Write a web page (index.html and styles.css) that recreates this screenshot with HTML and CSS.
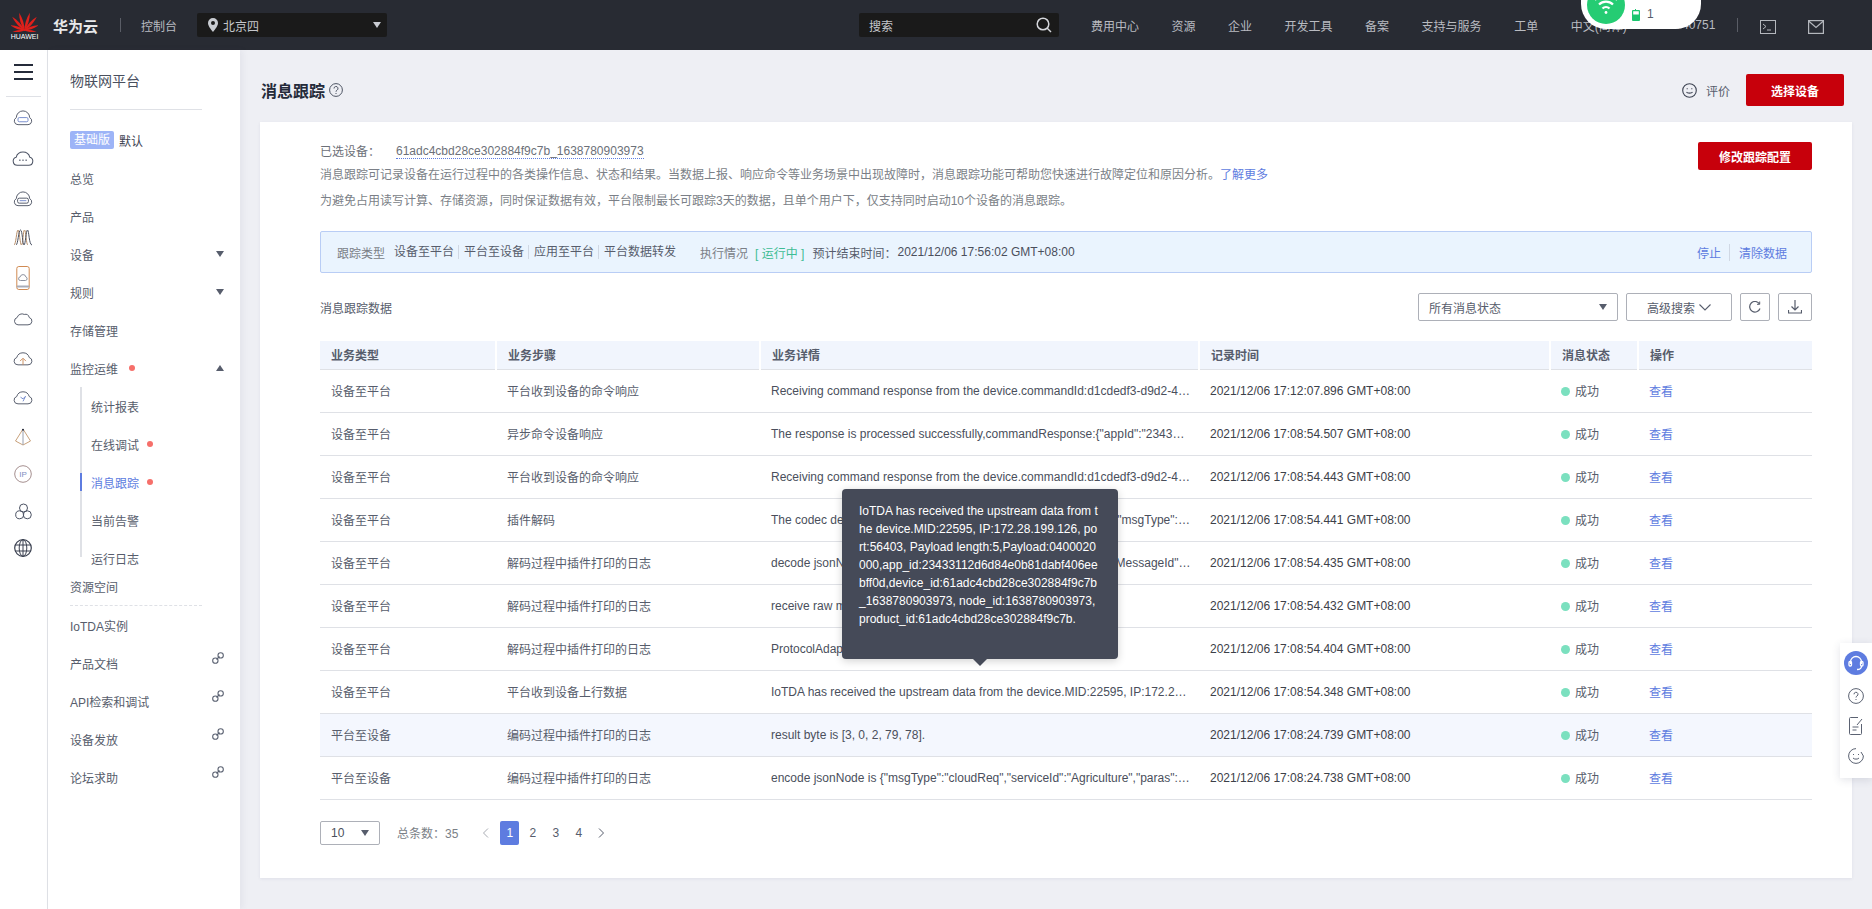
FILE: index.html
```html
<!DOCTYPE html>
<html lang="zh-CN">
<head>
    <meta charset="UTF-8">
    <meta name="viewport" content="width=device-width, initial-scale=1.0">
    <title>消息跟踪</title>
    <link rel="stylesheet" href="styles.css">
</head>
<body>
    <header class="topbar">
        <div class="logo">
            <svg width="27" height="21" viewBox="-13.5 -19 27 21">
                <g fill="#e0201b">
                    <path d="M0 1C-2.4 -5 -2.6 -12 -1 -18C1 -12 1.4 -5 0 1Z" transform="rotate(-14)"/>
                    <path d="M0 1C-2.4 -5 -2.6 -12 -1 -18C1 -12 1.4 -5 0 1Z" transform="rotate(-40)"/>
                    <path d="M0 1C-2.2 -4 -2.4 -9 -1 -15C1 -10 1.2 -4 0 1Z" transform="rotate(-68)"/>
                    <path d="M0 1C-1.6 -3 -1.8 -7 -1 -13C1 -8 1 -3 0 1Z" transform="rotate(-96)"/>
                    <path d="M0 1C-1.4 -5 -1 -12 1 -18C2.6 -12 2.4 -5 0 1Z" transform="rotate(14)"/>
                    <path d="M0 1C-1.4 -5 -1 -12 1 -18C2.6 -12 2.4 -5 0 1Z" transform="rotate(40)"/>
                    <path d="M0 1C-1.2 -4 -1 -10 1 -15C2.4 -9 2.2 -4 0 1Z" transform="rotate(68)"/>
                    <path d="M0 1C-1 -3 -1 -8 1 -13C1.8 -7 1.6 -3 0 1Z" transform="rotate(96)"/>
                </g>
            </svg>
            <span class="logo-text">HUAWEI</span>
        </div>
        <span class="brand">华为云</span>
        <span class="top-divider"></span>
        <span class="top-link console">控制台</span>
        <div class="region">
            <svg width="10" height="14" viewBox="0 0 10 14"><path fill="#c9ccd2" fill-rule="evenodd" d="M5 0a5 5 0 0 1 5 5c0 3-3 6.500-5 9-2-2.500-5-6-5-9a5 5 0 0 1 5-5zm0 3a2 2 0 1 0 0 4 2 2 0 0 0 0-4z"/></svg>
            <span>北京四</span>
            <i class="caret caret-light"></i>
        </div>
        <div class="search">
            <span>搜索</span>
            <svg width="16" height="16" viewBox="0 0 16 16" fill="none" stroke="#d5d7dc" stroke-width="1.500"><circle cx="7" cy="7" r="5.800"/><path d="M11 11l4 4"/></svg>
        </div>
        <nav class="top-nav">
            <span class="top-link">费用中心</span>
            <span class="top-link">资源</span>
            <span class="top-link">企业</span>
            <span class="top-link">开发工具</span>
            <span class="top-link">备案</span>
            <span class="top-link">支持与服务</span>
            <span class="top-link">工单</span>
            <span class="top-link">中文(简体)</span>
        </nav>
        <span class="top-link account">hw84740751</span>
        <span class="top-divider account-divider"></span>
        <svg class="top-icon" width="16" height="14" viewBox="0 0 16 14" fill="none" stroke="#b4b7bd"><rect x=".5" y=".5" width="15" height="13"/><path d="M3 4l3 2.500-3 2.500M7 10h4"/></svg>
        <svg class="top-icon mail-icon" width="16" height="14" viewBox="0 0 16 14" fill="none" stroke="#b4b7bd" stroke-width="1.200"><rect x=".6" y=".6" width="14.800" height="12.800"/><path d="M.6 1l7.400 6.500L15.400 1"/></svg>
    </header>

    <div class="net-widget">
        <div class="net-circle">
            <svg width="24" height="20" viewBox="0 0 24 20" fill="none" stroke="#fff" stroke-width="2.200"><path d="M1 5a15 15 0 0 1 22 0"/><path d="M5 9.500a10 10 0 0 1 14 0"/><path d="M8.500 13.500a5 5 0 0 1 7 0"/><circle cx="12" cy="17.500" r="1.400" fill="#fff" stroke="none"/></svg>
        </div>
        <svg class="net-battery" width="8" height="12" viewBox="0 0 8 12"><path fill="#1bc66f" fill-rule="evenodd" d="M1 1h2V0h1v1h3a1 1 0 0 1 1 1v9a1 1 0 0 1-1 1H1a1 1 0 0 1-1-1V2a1 1 0 0 1 1-1zm.2 1.200v3.300h5.600V2.200z"/></svg>
        <span class="net-count">1</span>
    </div>

    <div class="layout">
        <aside class="rail">
            <div class="hamburger"><i></i><i></i><i></i></div>
            <div class="rail-line"></div>
            <div class="rail-icons">
                <svg width="20" height="20" viewBox="0 0 24 24" fill="none" stroke="#4b5263" stroke-width="1.100"><path d="M6 20h12a4.500 4.500 0 0 0 2-8.500A8 8 0 0 0 4 11.500 4.500 4.500 0 0 0 6 20z"/><rect x="6" y="11.500" width="12" height="5" rx="1.500" stroke="#6f86c9"/></svg>
                <svg width="22" height="22" viewBox="0 0 24 24" fill="none" stroke="#4b5263" stroke-width="1.100"><path d="M6 20h12a4.500 4.500 0 0 0 1.500-8.800A7.800 7.800 0 0 0 4.500 11.200 4.500 4.500 0 0 0 6 20z"/><path d="M8 14.500h1.200M11.400 14.500h1.200M14.800 14.500H16" stroke-width="1.600"/></svg>
                <svg width="20" height="20" viewBox="0 0 24 24" fill="none" stroke="#4b5263" stroke-width="1.100"><path d="M6 20h12a4.500 4.500 0 0 0 2-8.500A8 8 0 0 0 4 11.500 4.500 4.500 0 0 0 6 20z"/><rect x="5.500" y="11" width="13" height="6" rx="2"/><path d="M8 14h8" stroke="#6f86c9"/></svg>
                <svg width="20" height="18" viewBox="0 0 20 18" fill="none" stroke="#4b5263"><path d="M1 17C3 17 3.500 2 5 2s2 15 3.500 15S10 2 11.500 2 13 17 15 17" stroke="#b88f6a"/><path d="M3 17C5 17 5.500 2 7.500 2S9.500 17 11 17s2-15 3.500-15S16 17 19 17"/></svg>
                <svg width="14" height="24" viewBox="0 0 14 24" fill="none" stroke="#4b5263"><rect x=".8" y=".5" width="12.400" height="23" rx="2" stroke="#d08a52"/><path d="M.8 20.500h12.400" stroke="#a9adb8" stroke-width="2"/><path d="M4.500 14.500h5a1.800 1.800 0 0 0 .4-3.500 2.900 2.900 0 0 0-5.700-.1 1.800 1.800 0 0 0 .3 3.600z" stroke="#8e93a0"/></svg>
                <svg width="20" height="20" viewBox="0 0 24 24" fill="none" stroke="#4b5263" stroke-width="1.100"><path d="M6 19h12a4.500 4.500 0 0 0 1.500-8.800 5 5 0 0 0-6-3.700A6 6 0 0 0 5 10.200 4.500 4.500 0 0 0 6 19z"/></svg>
                <svg width="20" height="20" viewBox="0 0 24 24" fill="none" stroke="#4b5263" stroke-width="1.100"><path d="M6 19h12a4.500 4.500 0 0 0 1.500-8.800A7.800 7.800 0 0 0 4.500 10.200 4.500 4.500 0 0 0 6 19z"/><path d="M12 19v-7M8.500 14.500L12 11l3.500 3.500" stroke="#c88a5a"/></svg>
                <svg width="20" height="20" viewBox="0 0 24 24" fill="none" stroke="#4b5263" stroke-width="1.100"><path d="M6 19h12a4.500 4.500 0 0 0 1.500-8.800A7.800 7.800 0 0 0 4.500 10.200 4.500 4.500 0 0 0 6 19z"/><path d="M9 11l3 2 3-3-3 6" stroke="#6f86c9"/></svg>
                <svg width="18" height="18" viewBox="0 0 18 18" fill="none" stroke="#9aa0ae"><path d="M9 1L1.500 13 9 17l7.500-4z" stroke="#c9a27c"/><path d="M9 1v16"/><circle cx="9" cy="1.800" r="1" fill="#252b3a" stroke="none"/></svg>
                <svg width="18" height="18" viewBox="0 0 18 18" fill="none" stroke="#a58f8f"><circle cx="9" cy="9" r="8.300"/><text class="rail-ip" x="9" y="12">IP</text></svg>
                <svg width="17" height="17" viewBox="0 0 17 17" fill="none" stroke="#4b5263"><circle cx="8.500" cy="5" r="4"/><circle cx="4.700" cy="11.800" r="4"/><circle cx="12.300" cy="11.800" r="4"/></svg>
                <svg width="18" height="18" viewBox="0 0 18 18" fill="none" stroke="#3b4150"><circle cx="9" cy="9" r="8.300" stroke-width="1.200"/><ellipse cx="9" cy="9" rx="3.800" ry="8.300"/><path d="M9 .7v16.600M1 6h16M1 12h16"/></svg>
            </div>
        </aside>

        <aside class="sidebar">
            <div class="side-title">物联网平台</div>
            <div class="side-line"></div>
            <div class="side-plan"><span class="plan-badge">基础版</span><span>默认</span></div>
            <ul class="menu">
                <li class="menu-item">总览</li>
                <li class="menu-item">产品</li>
                <li class="menu-item">设备<i class="caret caret-menu"></i></li>
                <li class="menu-item">规则<i class="caret caret-menu"></i></li>
                <li class="menu-item">存储管理</li>
                <li class="menu-item">监控运维<b class="dot dot-main"></b><i class="caret caret-menu caret-up"></i></li>
                <li class="submenu">
                    <div class="sub-item">统计报表</div>
                    <div class="sub-item">在线调试<b class="dot"></b></div>
                    <div class="sub-item active">消息跟踪<b class="dot"></b></div>
                    <div class="sub-item">当前告警</div>
                    <div class="sub-item">运行日志</div>
                </li>
                <li class="menu-item">资源空间</li>
                <li class="menu-dash"></li>
                <li class="menu-item iot">IoTDA实例</li>
                <li class="menu-item">产品文档<svg class="link-icon" width="12" height="12" viewBox="0 0 12 12" fill="none" stroke="#5b6272" stroke-width="1.100"><rect x="6" y=".7" width="5.300" height="5.300" rx="2.600"/><rect x=".7" y="6" width="5.300" height="5.300" rx="2.600"/><path d="M4.500 7.500l3-3"/></svg></li>
                <li class="menu-item">API检索和调试<svg class="link-icon" width="12" height="12" viewBox="0 0 12 12" fill="none" stroke="#5b6272" stroke-width="1.100"><rect x="6" y=".7" width="5.300" height="5.300" rx="2.600"/><rect x=".7" y="6" width="5.300" height="5.300" rx="2.600"/><path d="M4.500 7.500l3-3"/></svg></li>
                <li class="menu-item">设备发放<svg class="link-icon" width="12" height="12" viewBox="0 0 12 12" fill="none" stroke="#5b6272" stroke-width="1.100"><rect x="6" y=".7" width="5.300" height="5.300" rx="2.600"/><rect x=".7" y="6" width="5.300" height="5.300" rx="2.600"/><path d="M4.500 7.500l3-3"/></svg></li>
                <li class="menu-item">论坛求助<svg class="link-icon" width="12" height="12" viewBox="0 0 12 12" fill="none" stroke="#5b6272" stroke-width="1.100"><rect x="6" y=".7" width="5.300" height="5.300" rx="2.600"/><rect x=".7" y="6" width="5.300" height="5.300" rx="2.600"/><path d="M4.500 7.500l3-3"/></svg></li>
            </ul>
        </aside>

        <main class="main">
            <div class="page-head">
                <h1>消息跟踪</h1>
                <svg class="help-icon" width="14" height="14" viewBox="0 0 14 14" fill="none" stroke="#4e5564"><circle cx="7" cy="7" r="6.400"/><path d="M5 5.500a2 2 0 1 1 3 1.700c-.7.400-1 .8-1 1.500M7 10v1"/></svg>
                <div class="head-right">
                    <svg width="15" height="15" viewBox="0 0 15 15" fill="none" stroke="#3d4352" stroke-width="1.100"><circle cx="7.500" cy="7.500" r="6.800"/><path d="M4.500 9c.8 1.500 5.200 1.500 6 0M5.200 5.200v1M9.800 5.200v1"/></svg>
                    <span class="rate">评价</span>
                    <button class="btn-red btn-select">选择设备</button>
                </div>
            </div>

            <section class="card">
                <div class="intro">
                    <div class="intro-text">
                        <div class="device-line"><span class="device-label">已选设备：</span><span class="device-id">61adc4cbd28ce302884f9c7b_1638780903973</span></div>
                        <p>消息跟踪可记录设备在运行过程中的各类操作信息、状态和结果。当数据上报、响应命令等业务场景中出现故障时，消息跟踪功能可帮助您快速进行故障定位和原因分析。<a class="link">了解更多</a></p>
                        <p>为避免占用读写计算、存储资源，同时保证数据有效，平台限制最长可跟踪3天的数据，且单个用户下，仅支持同时启动10个设备的消息跟踪。</p>
                    </div>
                    <button class="btn-red btn-config">修改跟踪配置</button>
                </div>

                <div class="trace-bar">
                    <span class="trace-label">跟踪类型</span>
                    <span class="trace-tag first">设备至平台</span>
                    <span class="trace-tag">平台至设备</span>
                    <span class="trace-tag">应用至平台</span>
                    <span class="trace-tag last">平台数据转发</span>
                    <span class="trace-label state">执行情况</span>
                    <span class="running">[ 运行中 ]</span>
                    <span class="trace-end">预计结束时间：</span>
                    <span class="trace-time">2021/12/06 17:56:02 GMT+08:00</span>
                    <span class="trace-actions"><a class="link">停止</a><a class="link">清除数据</a></span>
                </div>

                <div class="filter-row">
                    <span class="filter-title">消息跟踪数据</span>
                    <div class="select select-status"><span>所有消息状态</span><i class="caret caret-menu"></i></div>
                    <div class="select select-adv"><span>高级搜索</span><svg width="12" height="7" viewBox="0 0 12 7" fill="none" stroke="#575d6c" stroke-width="1.100"><path d="M.5.500L6 6 11.500.500"/></svg></div>
                    <div class="select icon-btn"><svg width="12" height="12" viewBox="0 0 12 12" fill="none" stroke="#575d6c" stroke-width="1.200"><path d="M10.500 3A5.300 5.300 0 1 0 11 7.500"/><path d="M10.700.5v2.800H8" stroke-width="1"/></svg></div>
                    <div class="select icon-btn icon-btn-wide"><svg width="14" height="14" viewBox="0 0 14 14" fill="none" stroke="#575d6c" stroke-width="1.200"><path d="M7 0v9.500M3.500 6.500L7 10l3.500-3.500M.5 10v3h13v-3"/></svg></div>
                </div>

                <table class="log-table">
                    <colgroup>
                        <col class="col-type"><col class="col-step"><col class="col-detail"><col class="col-time"><col class="col-state"><col>
                    </colgroup>
                    <thead>
                        <tr><th>业务类型</th><th>业务步骤</th><th>业务详情</th><th>记录时间</th><th>消息状态</th><th>操作</th></tr>
                    </thead>
                    <tbody>
                        <tr><td>设备至平台</td><td>平台收到设备的命令响应</td><td class="detail">Receiving command response from the device.commandId:d1cdedf3-d9d2-4c5e-8f10-2a6b7c1e9d34</td><td class="time">2021/12/06 17:12:07.896 GMT+08:00</td><td><b class="ok"></b>成功</td><td><a class="link">查看</a></td></tr>
                        <tr><td>设备至平台</td><td>异步命令设备响应</td><td class="detail">The response is processed successfully,commandResponse:{"appId":"23433112d6d84e0b81dabf406eebff0d"}</td><td class="time">2021/12/06 17:08:54.507 GMT+08:00</td><td><b class="ok"></b>成功</td><td><a class="link">查看</a></td></tr>
                        <tr><td>设备至平台</td><td>平台收到设备的命令响应</td><td class="detail">Receiving command response from the device.commandId:d1cdedf3-d9d2-4c5e-8f10-2a6b7c1e9d34</td><td class="time">2021/12/06 17:08:54.443 GMT+08:00</td><td><b class="ok"></b>成功</td><td><a class="link">查看</a></td></tr>
                        <tr><td>设备至平台</td><td>插件解码</td><td class="detail">The codec decodes the data successfully,result is {"identifier":"0","msgType":"DEVICE_STATUS"}</td><td class="time">2021/12/06 17:08:54.441 GMT+08:00</td><td><b class="ok"></b>成功</td><td><a class="link">查看</a></td></tr>
                        <tr><td>设备至平台</td><td>解码过程中插件打印的日志</td><td class="detail">decode jsonNode is {"header":{"msgType":"deviceRsp"},"body":{"MessageId":"1"}}</td><td class="time">2021/12/06 17:08:54.435 GMT+08:00</td><td><b class="ok"></b>成功</td><td><a class="link">查看</a></td></tr>
                        <tr><td>设备至平台</td><td>解码过程中插件打印的日志</td><td class="detail">receive raw message is [4, 0, 2, 0, 0]</td><td class="time">2021/12/06 17:08:54.432 GMT+08:00</td><td><b class="ok"></b>成功</td><td><a class="link">查看</a></td></tr>
                        <tr><td>设备至平台</td><td>解码过程中插件打印的日志</td><td class="detail">ProtocolAdapter decode finished</td><td class="time">2021/12/06 17:08:54.404 GMT+08:00</td><td><b class="ok"></b>成功</td><td><a class="link">查看</a></td></tr>
                        <tr><td>设备至平台</td><td>平台收到设备上行数据</td><td class="detail">IoTDA has received the upstream data from the device.MID:22595, IP:172.28.199.126, port:56403, Payload length:5</td><td class="time">2021/12/06 17:08:54.348 GMT+08:00</td><td><b class="ok"></b>成功</td><td><a class="link">查看</a></td></tr>
                        <tr class="hovered"><td>平台至设备</td><td>编码过程中插件打印的日志</td><td class="detail">result byte is [3, 0, 2, 79, 78].</td><td class="time">2021/12/06 17:08:24.739 GMT+08:00</td><td><b class="ok"></b>成功</td><td><a class="link">查看</a></td></tr>
                        <tr><td>平台至设备</td><td>编码过程中插件打印的日志</td><td class="detail">encode jsonNode is {"msgType":"cloudReq","serviceId":"Agriculture","paras":{"value":"ON"}}</td><td class="time">2021/12/06 17:08:24.738 GMT+08:00</td><td><b class="ok"></b>成功</td><td><a class="link">查看</a></td></tr>
                    </tbody>
                </table>

                <div class="pager">
                    <div class="select select-size"><span>10</span><i class="caret caret-menu"></i></div>
                    <span class="total">总条数：35</span>
                    <svg class="pager-arrow" width="7" height="10" viewBox="0 0 7 10" fill="none" stroke="#a8abb3"><path d="M6 .5L1.500 5 6 9.500"/></svg>
                    <span class="page current">1</span>
                    <span class="page">2</span>
                    <span class="page">3</span>
                    <span class="page">4</span>
                    <svg class="pager-arrow" width="7" height="10" viewBox="0 0 7 10" fill="none" stroke="#575d6c"><path d="M1 .5L5.500 5 1 9.500"/></svg>
                </div>
            </section>
        </main>
    </div>

    <div class="tooltip">IoTDA has received the upstream data from the device.MID:22595, IP:172.28.199.126, port:56403, Payload length:5,Payload:0400020000,app_id:23433112d6d84e0b81dabf406eebff0d,device_id:61adc4cbd28ce302884f9c7b_1638780903973, node_id:1638780903973,product_id:61adc4cbd28ce302884f9c7b.</div>

    <div class="float-panel">
        <div class="float-service">
            <svg width="16" height="16" viewBox="0 0 16 16" fill="none" stroke="#fff" stroke-width="1.300"><path d="M2.500 9V7a5.500 5.500 0 0 1 11 0v2"/><rect x="1" y="6.500" width="2.500" height="4.500" rx="1"/><rect x="12.500" y="6.500" width="2.500" height="4.500" rx="1"/><path d="M13.500 11c0 2.500-2 3.500-4.500 3.500"/></svg>
        </div>
        <svg width="16" height="16" viewBox="0 0 16 16" fill="none" stroke="#5b6272"><circle cx="8" cy="8" r="7.400"/><path d="M6 6.300a2 2 0 1 1 3 1.700c-.7.400-1 .8-1 1.500M8 11v1"/></svg>
        <svg width="14" height="18" viewBox="0 0 14 18" fill="none" stroke="#5b6272"><path d="M9 .5H1.500a1 1 0 0 0-1 1v15a1 1 0 0 0 1 1h10a1 1 0 0 0 1-1V7"/><path d="M3.500 10h6M3.500 13h4M8 8l5-6"/></svg>
        <svg width="16" height="16" viewBox="0 0 16 16" fill="none" stroke="#5b6272"><path d="M8 .6a7.400 7.400 0 1 0 7.400 7.400L13 4"/><path d="M5 10c1 1.500 5 1.500 6 0M5.500 6v1M10.500 6v1"/></svg>
    </div>
</body>
</html>
```

FILE: styles.css
```css
* {
    box-sizing: border-box;
}
html, body {
    height: 100%;
}
body {
    margin: 0;
    overflow: hidden;
    font-family: "Liberation Sans", "Noto Sans CJK SC", sans-serif;
    font-size: 12px;
    color: #575d6c;
    background: #eeeff4;
}
i, b {
    font-style: normal;
    font-weight: normal;
}
ul {
    list-style: none;
    margin: 0;
    padding: 0;
}
p {
    margin: 0;
}
.link {
    color: #5e7ce0;
}
.caret {
    display: inline-block;
    width: 0;
    height: 0;
    border-left: 4px solid transparent;
    border-right: 4px solid transparent;
    border-top: 6px solid #575d6c;
}
.caret-light {
    border-top-color: #c9ccd2;
    margin-left: auto;
}
.caret-up {
    border-top: none;
    border-bottom: 6px solid #575d6c;
}

/* top bar */
.topbar {
    height: 50px;
    display: flex;
    align-items: center;
    padding-left: 11px;
    background: #282b33;
    color: #c5c7cc;
}
.logo {
    width: 27px;
    display: flex;
    flex-direction: column;
    align-items: center;
}
.logo svg {
    display: block;
}
.logo-text {
    font-size: 7px;
    line-height: 7px;
    margin-top: 1px;
    color: #fff;
}
.brand {
    margin-left: 15px;
    font-size: 15px;
    font-weight: bold;
    color: #e8e9eb;
}
.top-divider {
    width: 1px;
    height: 14px;
    background: #5a5d66;
    margin-left: 22px;
}
.top-link {
    white-space: nowrap;
    color: #b9bbc1;
}
.console {
    margin-left: 20px;
}
.region {
    width: 190px;
    height: 24px;
    margin-left: 20px;
    padding: 0 6px 0 11px;
    display: flex;
    align-items: center;
    gap: 5px;
    border-radius: 2px;
    background: #1a1a1a;
}
.search {
    width: 200px;
    height: 24px;
    margin-left: 472px;
    padding: 0 7px 0 10px;
    display: flex;
    align-items: center;
    justify-content: space-between;
    border-radius: 2px;
    background: #1a1a1a;
}
.top-nav {
    display: flex;
    gap: 32.500px;
    margin-left: 32px;
}
.account {
    margin-left: 20px;
}
.account-divider {
    margin-left: 22px;
}
.top-icon {
    margin-left: 22px;
    margin-top: 3px;
}
.mail-icon {
    margin-left: 32px;
}

/* network widget over the top bar */
.net-widget {
    position: absolute;
    top: 0;
    left: 1581px;
    width: 120px;
    height: 29px;
    border-radius: 0 0 25px 25px;
    background: #fff;
}
.net-circle {
    position: absolute;
    left: 6px;
    top: -14px;
    width: 38px;
    height: 38px;
    border-radius: 50%;
    background: #25cc73;
    display: flex;
    align-items: center;
    justify-content: center;
}
.net-battery {
    position: absolute;
    left: 51px;
    top: 9px;
}
.net-count {
    position: absolute;
    left: 66px;
    top: 7px;
    color: #575d6c;
}

/* body columns */
.layout {
    display: flex;
    height: calc(100% - 50px);
}
.rail {
    width: 48px;
    background: #fff;
    border-right: 1px solid #dfe1e6;
    padding: 14px 6px 0 6px;
}
.hamburger {
    height: 32px;
    display: flex;
    flex-direction: column;
    justify-content: space-between;
    padding: 0 8px 16px 8px;
}
.hamburger i {
    display: block;
    height: 2px;
    background: #252b3a;
}
.rail-line {
    height: 1px;
    margin-top: 0;
    background: #dfe1e6;
}
.rail-icons {
    display: flex;
    flex-direction: column;
    align-items: center;
    margin-top: 11px;
    margin-right: 1px;
}
.rail-icons svg {
    display: block;
    margin-bottom: 19px;
}
.rail-icons svg:nth-child(2n) {
    margin-bottom: 20px;
}
.rail-ip {
    font-size: 8px;
    text-anchor: middle;
    fill: #7f8ec0;
    stroke: none;
}
.sidebar {
    width: 192px;
    background: #fff;
    box-shadow: 3px 0 6px rgba(60, 70, 100, 0.06);
    padding-left: 22px;
    position: relative;
}
.side-title {
    margin-top: 21px;
    height: 20px;
    line-height: 20px;
    font-size: 14px;
    color: #4a505e;
}
.side-line {
    width: 132px;
    height: 1px;
    margin-top: 18px;
    background: #dfe1e6;
}
.side-plan {
    display: flex;
    align-items: center;
    gap: 5px;
    margin-top: 21px;
    height: 18px;
    color: #3c4250;
}
.plan-badge {
    width: 44px;
    height: 18px;
    line-height: 18px;
    text-align: center;
    border-radius: 2px;
    color: #fff;
    background: #9db4f7;
}
.menu {
    margin-top: 10px;
}
.menu-item {
    height: 38px;
    width: 154px;
    display: flex;
    align-items: center;
    position: relative;
}
.caret-menu {
    margin-left: auto;
}
.dot {
    width: 6px;
    height: 6px;
    margin-left: 8px;
    border-radius: 50%;
    background: #f66f6a;
}
.dot-main {
    margin-left: 11px;
}
.submenu {
    margin: 0 0 0 10px;
    border-left: 2px solid #dfe1e6;
    padding: 0;
    height: 170px;
    margin-top: 10px;
    margin-bottom: 10px;
}
.sub-item {
    height: 38px;
    margin-top: -10px;
    padding-left: 9px;
    margin-bottom: 10px;
    display: flex;
    align-items: center;
    position: relative;
}
.sub-item.active {
    color: #5e7ce0;
}
.sub-item.active::before {
    content: "";
    position: absolute;
    left: -2px;
    top: 10px;
    width: 2px;
    height: 18px;
    background: #5e7ce0;
}
.menu-dash {
    width: 132px;
    margin-top: 0;
    border-top: 1px dashed #dfe1e6;
}
.link-icon {
    margin-left: auto;
    margin-top: -10px;
}

/* main content */
.main {
    flex: 1;
    padding: 0 20px 0 20px;
}
.page-head {
    height: 72px;
    display: flex;
    align-items: center;
    padding-top: 8px;
    margin-right: 8px;
}
.page-head h1 {
    margin: 0;
    font-size: 16px;
    font-weight: bold;
    color: #252b3a;
    margin-left: 1px;
}
.help-icon {
    margin-left: 4px;
}
.head-right {
    margin-left: auto;
    display: flex;
    align-items: center;
}
.rate {
    margin-left: 9px;
    margin-right: 16px;
}
button {
    font-family: inherit;
    font-size: 12px;
    font-weight: bold;
    color: #fff;
    background: #c7000b;
    border: none;
    border-radius: 2px;
    padding: 0;
}
.btn-select {
    width: 98px;
    height: 32px;
}
.btn-config {
    width: 114px;
    height: 28px;
    margin-left: auto;
    margin-top: 20px;
}
.card {
    height: 756px;
    background: #fff;
    box-shadow: 0 1px 3px rgba(60, 70, 100, 0.08);
    padding: 0 40px 0 60px;
}
.intro {
    display: flex;
    height: 109px;
}
.intro-text p {
    line-height: 26px;
    color: #7b7f87;
}
.device-line {
    margin-top: 20px;
    height: 20px;
    line-height: 20px;
    display: flex;
    color: #6c7078;
}
.device-label {
    width: 76px;
}
.device-id {
    height: 17px;
    line-height: 18px;
    border-bottom: 1px dotted #5e7ce0;
}
.trace-bar {
    height: 42px;
    display: flex;
    align-items: center;
    padding: 0 24px 0 16px;
    background: #eaf4fe;
    border: 1px solid #b9cdf5;
    border-radius: 2px;
}
.trace-label {
    color: #7b7f87;
}
.trace-tag {
    padding: 0 4px 0 5px;
    border-right: 1px solid #d0d8e4;
    line-height: 14px;
}
.trace-tag.first {
    margin-left: 9px;
    padding-left: 0;
}
.trace-tag.last {
    border-right: none;
}
.state {
    margin-left: 20px;
}
.running {
    margin-left: 7px;
    color: #3ebd95;
    word-spacing: 0;
}
.trace-end {
    margin-left: 8px;
}
.trace-time {
    margin-left: 1px;
    color: #4a4f5c;
}
.trace-actions {
    margin-left: auto;
    display: flex;
    align-items: center;
}
.trace-actions .link:first-child {
    padding-right: 8px;
    margin-right: 9px;
    border-right: 1px solid #d0d8e4;
}
.filter-row {
    height: 68px;
    display: flex;
    align-items: center;
    gap: 8px;
    padding-bottom: 0;
}
.filter-title {
    margin-right: auto;
}
.select {
    height: 28px;
    display: flex;
    align-items: center;
    border: 1px solid #adb0b8;
    border-radius: 2px;
    background: #fff;
}
.select-status {
    width: 200px;
    padding: 0 10px;
}
.select-adv {
    width: 106px;
    justify-content: center;
    gap: 4px;
}
.icon-btn {
    width: 30px;
    justify-content: center;
}
.icon-btn-wide {
    width: 34px;
}
.log-table {
    width: 100%;
    border-collapse: collapse;
    table-layout: fixed;
}
.col-type {
    width: 176px;
}
.col-step {
    width: 264px;
}
.col-detail {
    width: 439px;
}
.col-time {
    width: 351px;
}
.col-state {
    width: 88px;
}
.log-table th {
    height: 28px;
    padding: 0 11px;
    text-align: left;
    font-weight: bold;
    color: #575d6c;
    background: #f1f5fd;
    border-bottom: 1px solid #dfe1e6;
    border-right: 2px solid #fff;
}
.log-table th:last-child {
    border-right: none;
}
.log-table td {
    height: 43px;
    padding: 0 11px;
    border-bottom: 1px solid #dfe1e6;
    white-space: nowrap;
    overflow: hidden;
    text-overflow: ellipsis;
}
.log-table .detail {
    color: #4a4f5c;
    padding-right: 8px;
}
.log-table .time {
    color: #3c4048;
}
.hovered td {
    background: #f4f7fe;
}
.ok {
    display: inline-block;
    width: 9px;
    height: 9px;
    margin-right: 5px;
    border-radius: 50%;
    background: #7be0bf;
}
.pager {
    margin-top: 21px;
    display: flex;
    align-items: center;
}
.select-size {
    width: 60px;
    height: 24px;
    padding: 0 10px;
    color: #4a4f5c;
}
.total {
    margin-left: 17px;
    color: #7b7f87;
}
.pager-arrow {
    margin-left: 24px;
}
.page {
    width: 19px;
    height: 24px;
    line-height: 24px;
    text-align: center;
    margin-left: 4px;
}
.page.current {
    margin-left: 11px;
    border-radius: 2px;
    color: #fff;
    background: #5e7ce0;
}
.page + .pager-arrow {
    margin-left: 10px;
}

/* hover tooltip over the table */
.tooltip {
    position: absolute;
    left: 842px;
    top: 489px;
    width: 276px;
    height: 170px;
    padding: 13px 17px;
    line-height: 18px;
    color: #fff;
    background: #454a58;
    border-radius: 4px;
    word-break: break-all;
    box-shadow: 0 2px 8px rgba(0, 0, 0, 0.18);
}
.tooltip::after {
    content: "";
    position: absolute;
    left: 131px;
    bottom: -7px;
    border-left: 7px solid transparent;
    border-right: 7px solid transparent;
    border-top: 7px solid #454a58;
}

/* help panel on the right edge */
.float-panel {
    position: absolute;
    left: 1840px;
    top: 643px;
    width: 32px;
    height: 135px;
    padding-top: 8px;
    display: flex;
    flex-direction: column;
    align-items: center;
    gap: 13px;
    background: #fff;
    box-shadow: 0 2px 8px rgba(60, 70, 100, 0.15);
}
.float-service {
    width: 24px;
    height: 24px;
    border-radius: 50%;
    display: flex;
    align-items: center;
    justify-content: center;
    background: #5e7ce0;
}
```
